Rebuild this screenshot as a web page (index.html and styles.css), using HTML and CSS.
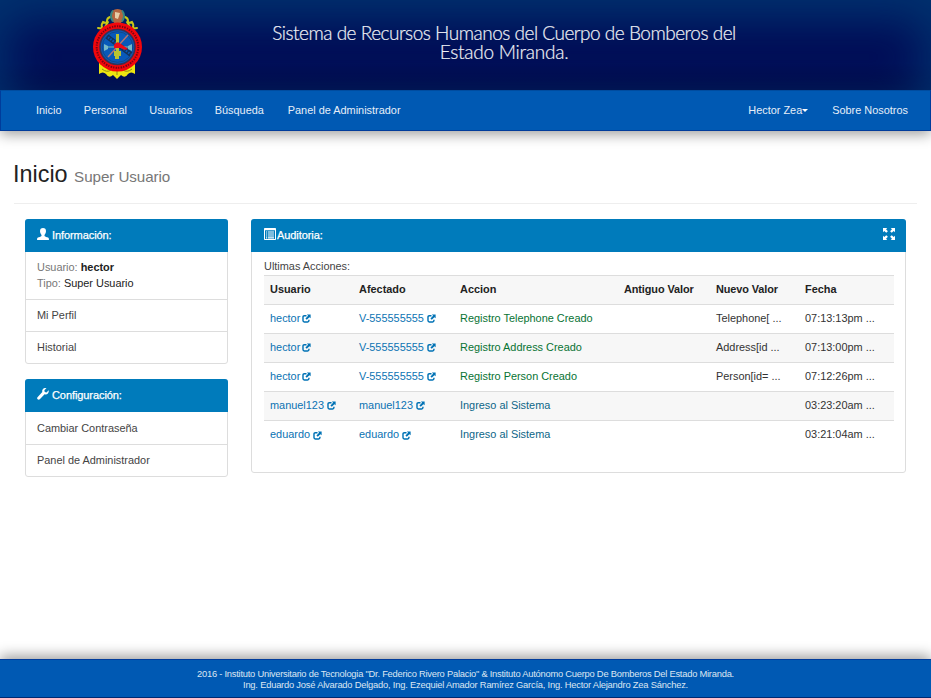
FILE: index.html
```html
<!DOCTYPE html>
<html lang="es">
<head>
<meta charset="utf-8">
<title>Sistema de Recursos Humanos</title>
<link rel="stylesheet" href="styles.css">
</head>
<body>
<svg class="defs" aria-hidden="true">
  <symbol id="share" viewBox="0 0 10 10"><path d="M5 1.9H2.6Q1.1 1.9 1.1 3.4V7.3Q1.1 8.8 2.6 8.8H6.2Q7.7 8.8 7.7 7.3V6.4" fill="none" stroke="currentColor" stroke-width="1.6"/><path d="M5.4.6H9.6V4.8L8.2 3.5 5.3 6.5 3.8 5 6.8 2Z" fill="currentColor"/></symbol>
</svg>
<header class="banner">
  <svg class="crest" viewBox="0 0 54 72">
    <g fill="none" stroke="#c9c817" stroke-width="2" stroke-linecap="round">
      <path d="M20 8q-3 1-3 4t-4 1q-2 3-1 5t-4 1M35 8q3 1 3 4t4 1q2 3 1 5t4 1M18 13l-3 5M37 13l3 5"/>
    </g>
    <path d="M9 53v12q4-3 7 0 3 5 7 1l4 4 4-4q4 4 7-1 3-3 7 0V53Z" fill="#ece610"/>
    <path d="M12 60q5 4 9 1m12 0q4 3 9-1M27 62v4" fill="none" stroke="#8f8a12"/>
    <path d="M22 2q5.500-4 11 0v9q-2 4-5.500 4T22 11Z" fill="#b5653f"/>
    <path d="M23 1.500q-4 5 0 11M32 1.500q4 5 0 11" fill="none" stroke="#39877f" stroke-width="2"/>
    <path d="M25 3l5 1-2 6-3-1Z" fill="#e6cfa8"/>
    <circle cx="27.500" cy="38" r="24.500" fill="#f3060b"/>
    <circle cx="27.500" cy="38" r="20.800" fill="none" stroke="#7a0313" stroke-width="2" stroke-dasharray="1.200 1 1.600 1.300"/>
    <circle cx="27.500" cy="38" r="17.500" fill="#0859b9" stroke="#3a3153" stroke-width="1.500"/>
    <circle cx="27.500" cy="38" r="15.300" fill="none" stroke="#174273" stroke-width=".7"/>
    <path d="M16 29l24 18M18 26l24 18" stroke="#12345c" stroke-width="1.500"/>
    <path d="M17 27.500l24 18" stroke="#12345c" stroke-width="4" stroke-dasharray="1.300 1.500"/>
    <path d="M38 26L18 48" stroke="#b57471" stroke-width="1.400"/>
    <path d="M15 38h25" stroke="#579cae" stroke-width="1.500"/>
    <path d="M14 35l4 2v3l-4 2ZM42 35l-4 2v3l4 2Z" fill="#76b9c9"/>
    <path d="M26 25h3v17h2v5h-2v3h-4v-3h-1v-5h2Z" fill="#b9c333"/>
    <path d="M24 36q3-5 7-1l7 5q-4 2-7-1h-7Z" fill="#ec0a17"/>
  </svg>
  <h1 class="title"><span class="title-first">Sistema de Recursos Humanos del Cuerpo de Bomberos del</span><span class="title-second">Estado Miranda.</span></h1>
</header>
<nav class="navbar">
  <div class="links"><a>Inicio</a><a>Personal</a><a>Usuarios</a><a>Búsqueda</a><a class="admin">Panel de Administrador</a></div>
  <div class="links user"><a>Hector Zea<i class="caret"></i></a><a>Sobre Nosotros</a></div>
</nav>
<main>
  <h2 class="page-header">Inicio <small>Super Usuario</small></h2>
  <div class="columns">
    <aside class="side">
      <section class="panel">
        <h3 class="panel-heading"><svg class="icon" viewBox="0 0 12 12"><path d="M6 0q3 0 3 3.300Q9 5.500 7.500 7v.9q1.400 1.200 3.600 1.600.9.300.9 2.500H0q0-2.200.9-2.500 2.200-.4 3.600-1.600V7Q3 5.500 3 3.300 3 0 6 0Z"/></svg><span>Información:</span></h3>
        <div class="item first"><span class="muted">Usuario:</span> <b>hector</b><br><span class="muted">Tipo:</span> <span class="dark">Super Usuario</span></div>
        <div class="item">Mi Perfil</div>
        <div class="item">Historial</div>
      </section>
      <section class="panel">
        <h3 class="panel-heading"><svg class="icon" viewBox="0 0 12 12"><path d="M11.700 2.200 9.500 4.400 7.700 3.900 7.400 2.300 9.500.1Q7.400-.4 6 1 4.800 2.300 5.300 4L.5 9.200Q-.3 10.200.6 11.300q1.100.9 2.200 0L7.600 6.300q2 .5 3.300-.8 1.200-1.400.8-3.300Z"/></svg><span>Configuración:</span></h3>
        <div class="item">Cambiar Contraseña</div>
        <div class="item">Panel de Administrador</div>
      </section>
    </aside>
    <section class="panel audit">
      <h3 class="panel-heading"><svg class="icon" viewBox="0 0 12 12"><path fill-rule="evenodd" d="M.8 0h10.400q.8 0 .8.800v10.400q0 .8-.8.800H.8Q0 12 0 11.200V.8Q0 0 .8 0ZM1 2.300V11h10V2.300Z"/><path d="M2 3.400h1.200v1.200H2zm2 0h6v1.200H4zM2 5.400h1.200v1.200H2zm2 0h6v1.200H4zM2 7.400h1.200v1.200H2zm2 0h6v1.200H4zM2 9.300h1.200v1.100H2zm2 0h6v1.100H4z"/></svg><span>Auditoria:</span>
        <svg class="icon expand" viewBox="0 0 13 13"><path d="M0 0h4.600L3.300 1.400 5.300 3.400 3.500 5.200 1.400 3.200 0 4.600ZM13 0H8.400l1.300 1.400-2 2 1.800 1.800 2.100-2L13 4.600ZM0 13h4.600l-1.300-1.400 2-2-1.800-1.800-2.100 2L0 8.400ZM13 13H8.400l1.300-1.400-2-2 1.800-1.800 2.100 2L13 8.400Z"/></svg></h3>
      <div class="panel-body">
        <div>Ultimas Acciones:</div>
        <table>
          <colgroup><col class="c1"><col class="c2"><col class="c3"><col class="c4"><col class="c5"><col class="c6"></colgroup>
          <tbody>
          <tr><th>Usuario</th><th>Afectado</th><th>Accion</th><th class="tight">Antiguo Valor</th><th class="tight">Nuevo Valor</th><th>Fecha</th></tr>
          <tr><td><a>hector<svg class="near"><use href="#share"/></svg></a></td><td><a>V-555555555 <svg><use href="#share"/></svg></a></td><td class="create">Registro Telephone Creado</td><td></td><td>Telephone[ ...</td><td>07:13:13pm ...</td></tr>
          <tr><td><a>hector<svg class="near"><use href="#share"/></svg></a></td><td><a>V-555555555 <svg><use href="#share"/></svg></a></td><td class="create">Registro Address Creado</td><td></td><td>Address[id ...</td><td>07:13:00pm ...</td></tr>
          <tr><td><a>hector<svg class="near"><use href="#share"/></svg></a></td><td><a>V-555555555 <svg><use href="#share"/></svg></a></td><td class="create">Registro Person Creado</td><td></td><td>Person[id= ...</td><td>07:12:26pm ...</td></tr>
          <tr><td><a>manuel123 <svg><use href="#share"/></svg></a></td><td><a>manuel123 <svg><use href="#share"/></svg></a></td><td class="login">Ingreso al Sistema</td><td></td><td></td><td>03:23:20am ...</td></tr>
          <tr><td><a>eduardo <svg><use href="#share"/></svg></a></td><td><a>eduardo <svg><use href="#share"/></svg></a></td><td class="login">Ingreso al Sistema</td><td></td><td></td><td>03:21:04am ...</td></tr>
          </tbody>
        </table>
      </div>
    </section>
  </div>
</main>
<footer>
  <div class="line1">2016 - Instituto Universitario de Tecnologia "Dr. Federico Rivero Palacio" &amp; Instituto Autónomo Cuerpo De Bomberos Del Estado Miranda.</div>
  <div class="line2">Ing. Eduardo José Alvarado Delgado, Ing. Ezequiel Amador Ramírez García, Ing. Hector Alejandro Zea Sánchez.</div>
</footer>
</body>
</html>
```
FILE: styles.css
```css
* { box-sizing: border-box; }
body {
  margin: 0; height: 698px; overflow: hidden; display: flex; flex-direction: column;
  font: 10.92px/15.6px "Liberation Sans", Arial, sans-serif; color: #444; background: #fff;
}
h1, h2, h3 { margin: 0; font-weight: normal; }
.defs { position: absolute; width: 0; height: 0; }

.banner {
  height: 90px; flex: none; display: grid; grid-template-columns: 92px 54px 1fr;
  background: linear-gradient(transparent 70%, #00003f), #000c56;
  box-shadow: inset 0 12px 45px 8px #00326f;
  clip-path: inset(0);
}
.crest { grid-column: 2; width: 54px; height: 72px; margin: 9px 0 0 -2px; }
.title {
  grid-column: 3; width: 520px; margin: 23px 0 0 98px; text-align: center;
  font: 300 19px/19px Lato, sans-serif; color: #eef0f5; white-space: nowrap;
  -webkit-text-stroke: .2px #eef0f5;
}
.title span { display: block; line-height: 19px; }
.title-first { letter-spacing: -.49px; }
.title-second { letter-spacing: -.25px; }

.navbar {
  height: 41px; flex: none; padding: 1px 22px 0 35px; display: flex; justify-content: space-between; align-items: center;
  background: #0059b3; border: 1px solid #003c9b; border-top-color: #004c9f;
  box-shadow: 0 3px 14px rgba(0,0,0,.4); color: #e6eef8;
}
.links { display: flex; gap: 22.400px; }
.user { gap: 24px; }
.links a { white-space: nowrap; }
.admin { margin-left: 1.500px; }
.caret { display: inline-block; border: 3px solid transparent; border-top-color: #fff; border-bottom: 0; vertical-align: 2px; }

main { flex: 1; padding: 0 14px; }
.page-header { height: 73px; padding-top: 30px; border-bottom: 1px solid #eee; font-size: 23.400px; line-height: 26px; color: #222; text-indent: -1px; }
.page-header small { font-size: 15.210px; letter-spacing: -.08px; color: #777; }
.columns { display: flex; gap: 23px; align-items: flex-start; padding: 15px 11px 0; }
.side { width: 203px; flex: none; display: grid; gap: 15px; }
.panel { border: 1px solid #ddd; border-radius: 3px; background: #fff; }
.panel-heading {
  height: 33px; margin: -1px -1px 0; padding: 0 13px 0 12px; display: flex; align-items: center;
  border-radius: 3px 3px 0 0; background: #007bbb; color: #fff; font-size: 11px; letter-spacing: -.08px; -webkit-text-stroke: .25px #fff;
}
.panel-heading span { padding-left: 3px; }
.icon { width: 12px; height: 12px; fill: #fff; stroke: none; margin-top: -3px; }
.expand { margin-left: auto; }
.item { height: 32px; padding: 8.500px 11px; }
.item.first { height: 47px; padding-top: 8px; }
.item + .item { border-top: 1px solid #ddd; padding-top: 7.500px; }
.muted { color: #777; }
.item b, .dark { color: #222; }
.audit { width: 655px; height: 254px; flex: none; }
.audit .panel-heading { padding: 0 11px 0 13px; }
.audit .panel-heading span { padding-left: 1px; }
.panel-body { padding: 7px 12px 0; }
table { width: 630px; table-layout: fixed; border-collapse: collapse; }
.c1 { width: 89px; } .c2 { width: 101px; } .c3 { width: 164px; } .c4 { width: 92px; } .c5 { width: 89px; } .c6 { width: 95px; }
tr { height: 29px; border-top: 1px solid #ddd; }
tr:nth-child(odd) { background: #f7f7f7; }
th, td { padding: 0 6px; text-align: left; color: #333; white-space: nowrap; }
th { color: #222; }
.tight { letter-spacing: -.1px; }
td a { color: #0b73b3; }
td svg { width: 9px; height: 9px; vertical-align: -1.500px; color: #0072b5; }
.near { margin-left: 2px; }
td.create { color: #087333; }
td.login { color: #0d6688; }

footer {
  height: 39px; flex: none; padding-top: 9px; text-align: center; white-space: nowrap;
  background: #0059b3; border-top: 1px solid #003c9b; border-bottom: 1px solid #002a72;
  box-shadow: 0 -3px 14px rgba(0,0,0,.4); color: #dce6f2; font-size: 9.360px; line-height: 11px;
}
.line1 { letter-spacing: -.235px; }
.line2 { letter-spacing: -.21px; }
```
